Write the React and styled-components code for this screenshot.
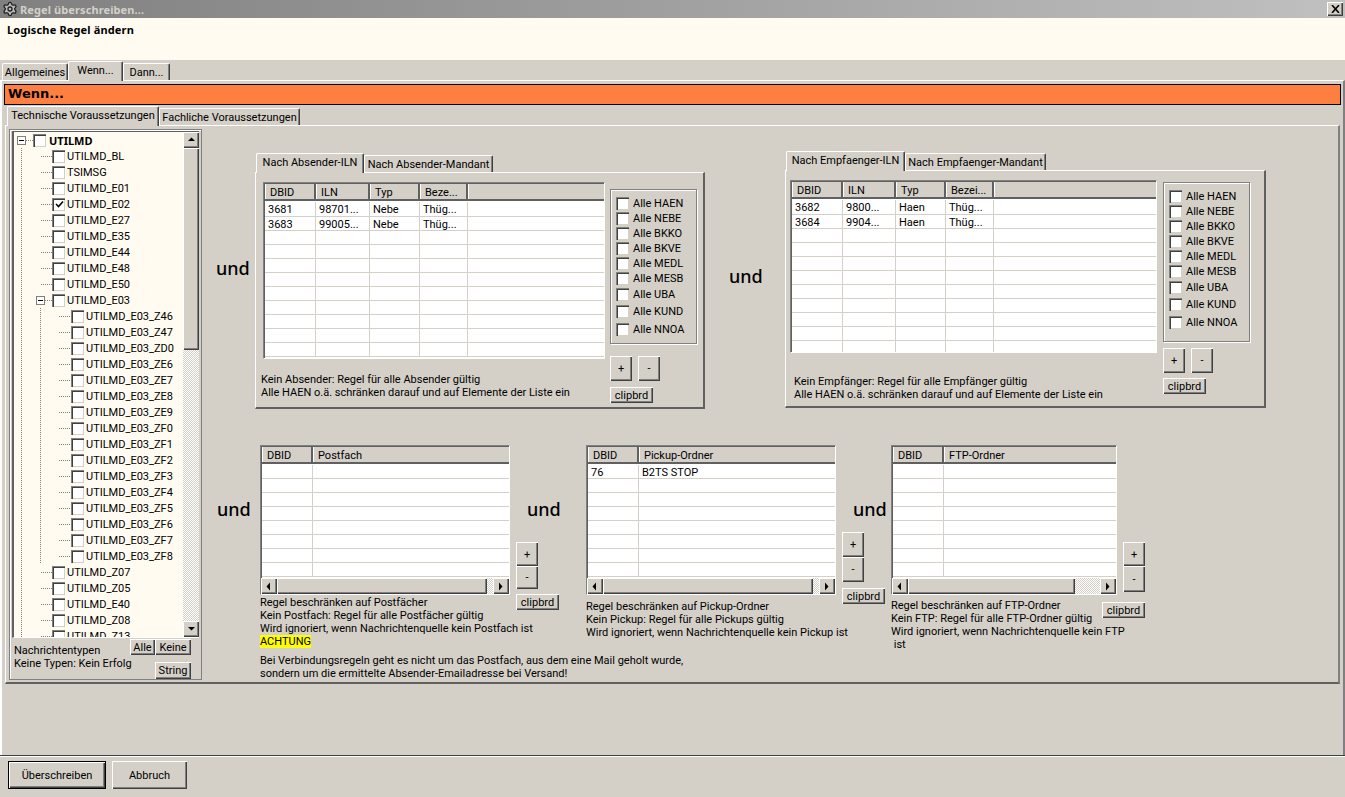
import React from 'react';
import styled, { createGlobalStyle } from 'styled-components';
import { Settings } from 'lucide-react';

const GlobalStyle = createGlobalStyle`
  html, body {
    margin: 0;
    padding: 0;
    background: #d4d0c8;
    overflow: hidden;
  }
  * { box-sizing: border-box; }
`

const raised = `box-shadow: inset 1px 1px #fff, inset -1px -1px #404040, inset -2px -2px #808080;`

const Page = styled.div`
  width: 1345px;
  height: 797px;
  display: flex;
  flex-direction: column;
  background: #d4d0c8;
  color: #000;
  font-family: Roboto, "Noto Sans", sans-serif;
  font-size: 11px;
  line-height: 13px;
`
const TitleBar = styled.div`
  height: 18px;
  flex: none;
  display: flex;
  align-items: center;
  padding: 0 2px;
  gap: 2px;
  background: linear-gradient(to right, #808080, #c0c0c0);
`
const TitleText = styled.div`
  flex: 1;
  color: #d4d0c8;
  font-family: "Noto Sans", sans-serif;
  font-weight: 700;
  font-size: 11px;
  letter-spacing: 0.1px;
`
const CloseButton = styled.div`
  width: 16px;
  height: 14px;
  display: flex;
  align-items: center;
  justify-content: center;
  background: #d4d0c8;
  ${raised}
`
const Header = styled.div`
  height: 42px;
  flex: none;
  padding: 5px 7px;
  background: #fffbf0;
  font-family: "Noto Sans", sans-serif;
  font-weight: 700;
  letter-spacing: 0.15px;
`
const TabRow = styled.div`
  display: flex;
  align-items: flex-end;
  flex: none;
  height: ${p => p.$h}px;
  padding-left: ${p => p.$left || 0}px;
  position: relative;
  z-index: 1;
`
const Tab = styled.div`
  width: ${p => p.$w}px;
  height: ${p => (p.$active ? 20 : 17)}px;
  margin-bottom: ${p => (p.$active ? -1 : 0)}px;
  padding-top: 2px;
  text-align: center;
  white-space: nowrap;
  background: #d4d0c8;
  border-top: 1px solid #fff;
  border-left: 1px solid #fff;
  border-right: 1px solid #404040;
  border-radius: 2px 2px 0 0;
  box-shadow: inset -1px 0 #808080;
`
const OuterPanel = styled.div`
  height: 675px;
  flex: none;
  padding: 3px 2px 0 2px;
  border-top: 1px solid #fff;
  border-left: 2px solid #fff;
  border-right: 2px solid #808080;
`
const OrangeBar = styled.div`
  height: 21px;
  padding-left: 3px;
  border: 1px solid #000;
  background: #ff7f40;
  font-family: "DejaVu Sans", sans-serif;
  font-weight: 700;
  font-size: 13px;
  line-height: 18px;
`
const InnerPanel = styled.div`
  height: 559px;
  margin: 0 1px 0 1px;
  padding: 3px;
  display: flex;
  border-top: 1px solid #fff;
  border-left: 1px solid #fff;
  border-right: 2px solid #808080;
  border-bottom: 2px solid #606060;
`
const TreeBox = styled.div`
  width: 193px;
  height: 551px;
  flex: none;
  display: flex;
  flex-direction: column;
  border: 1px solid #808080;
  box-shadow: inset 1px 1px #fff;
`
const TreeView = styled.div`
  height: 507px;
  margin: 1px 2px 0 2px;
  flex: none;
  display: flex;
  background: #fffbf0;
  border-top: 1px solid #606060;
  border-left: 2px solid #606060;
  border-bottom: 1px solid #fff;
`
const TreeList = styled.div`
  flex: 1;
  overflow: hidden;
`
const TreeRow = styled.div`
  height: 16px;
  display: flex;
  align-items: center;
  white-space: nowrap;
  ${p => p.$bold && `font-weight: 700; font-family: "Noto Sans", sans-serif;`}
`
const GuideV = styled.span`
  width: ${p => p.$w}px;
  height: 16px;
  flex: none;
  margin-left: ${p => p.$left}px;
  background: repeating-linear-gradient(to bottom, #808080 0 1px, transparent 1px 2px) left / 1px 100% no-repeat;
`
const Stub = styled.span`
  width: ${p => p.$w}px;
  height: 1px;
  flex: none;
  margin-left: ${p => p.$left || 0}px;
  background: repeating-linear-gradient(to right, #808080 0 1px, transparent 1px 2px);
`
const Expander = styled.span`
  width: 9px;
  height: 9px;
  flex: none;
  margin-left: ${p => p.$left}px;
  border: 1px solid #808080;
  background: linear-gradient(#000, #000) center / 5px 1px no-repeat #fff;
`
const Box = styled.span`
  width: 13px;
  height: 13px;
  flex: none;
  margin-right: ${p => p.$gap || 3}px;
  background: #fff;
  border-top: 1px solid #808080;
  border-left: 1px solid #808080;
  box-shadow: inset 1px 1px #404040, inset -1px -1px #d4d0c8;
  display: flex;
  align-items: center;
  justify-content: center;
`
const ScrollV = styled.div`
  width: 16px;
  flex: none;
  display: flex;
  flex-direction: column;
  background: repeating-conic-gradient(#fff 0 25%, #d4d0c8 0 50%) 0 0 / 2px 2px;
`
const ScrollH = styled.div`
  height: 16px;
  flex: none;
  display: flex;
  background: repeating-conic-gradient(#fff 0 25%, #d4d0c8 0 50%) 0 0 / 2px 2px;
`
const ScrollBtn = styled.div`
  width: 16px;
  height: 16px;
  flex: none;
  display: flex;
  align-items: center;
  justify-content: center;
  background: #d4d0c8;
  margin-left: ${p => (p.$push ? 'auto' : 0)};
  margin-top: ${p => (p.$pushTop ? 'auto' : 0)};
  ${raised}
`
const Thumb = styled.div`
  flex: none;
  width: ${p => p.$w || 16}px;
  height: ${p => p.$h || 16}px;
  background: #d4d0c8;
  ${raised}
`
const TreeFooter = styled.div`
  flex: 1;
  display: grid;
  grid-template-columns: 120px 25px 36px;
  grid-template-rows: 16px 7px 17px;
  padding-top: 1px;
`
const FooterText = styled.div`
  grid-row: 1 / 4;
  padding: 5px 0 0 4px;
  white-space: nowrap;
`
const Btn = styled.div`
  display: flex;
  align-items: center;
  justify-content: center;
  flex: none;
  width: ${p => (p.$w ? `${p.$w}px` : 'auto')};
  height: ${p => (p.$h ? `${p.$h}px` : 'auto')};
  background: #d4d0c8;
  white-space: nowrap;
  ${raised}
`
const StringBtn = styled(Btn)`
  grid-column: 3;
  grid-row: 3;
`
const Content = styled.div`
  flex: 1;
  display: flex;
  flex-direction: column;
`
const RowOne = styled.div`
  height: 258px;
  margin-top: 21px;
  flex: none;
  display: flex;
  align-items: flex-start;
`
const RowTwo = styled.div`
  margin-top: 37px;
  flex: none;
  display: flex;
  align-items: flex-start;
`
const Und = styled.div`
  width: 32px;
  flex: none;
  margin-left: ${p => p.$left}px;
  margin-top: ${p => p.$top}px;
  font-family: "Noto Sans", sans-serif;
  font-size: 18px;
  line-height: 22px;
  font-weight: 500;
`
const GroupWrap = styled.div`
  flex: none;
  width: ${p => p.$w}px;
  margin-left: ${p => p.$left}px;
  margin-top: ${p => p.$top}px;
`
const GroupPanel = styled.div`
  height: ${p => p.$h}px;
  padding: 9px 0 0 ${p => p.$padLeft}px;
  display: flex;
  gap: ${p => p.$gap}px;
  background: #d4d0c8;
  border-top: 1px solid #fff;
  border-left: 1px solid #fff;
  border-right: 2px solid #606060;
  border-bottom: 2px solid #606060;
`
const GroupLeft = styled.div`
  flex: none;
  display: flex;
  flex-direction: column;
`
const GroupRight = styled.div`
  flex: none;
  display: flex;
  flex-direction: column;
`
const HelpText = styled.div`
  white-space: nowrap;
  margin-top: ${p => p.$top || 0}px;
  margin-left: ${p => p.$left || 0}px;
`
const Frame = styled.div`
  width: ${p => p.$w}px;
  height: ${p => p.$h}px;
  flex: none;
  display: flex;
  flex-direction: column;
  overflow: hidden;
  background: #fff;
  border: 1px solid #fff;
  border-top-color: #808080;
  border-left-color: #808080;
  box-shadow: inset 1px 1px #606060;
`
const HeadRow = styled.div`
  height: 17px;
  flex: none;
  display: flex;
  background: #d4d0c8;
  margin: 1px 0 0 1px;
  border-bottom: 2px solid #606060;
`
const HeadCell = styled.div`
  flex: ${p => (p.$w ? 'none' : '1')};
  width: ${p => (p.$w ? `${p.$w}px` : 'auto')};
  padding: 3px 0 0 4px;
  line-height: 12px;
  white-space: nowrap;
  border-left: 1px solid #fff;
  border-right: ${p => (p.$w ? '2px solid #606060' : 'none')};
`
const BodyRow = styled.div`
  height: ${p => p.$h}px;
  flex: none;
  display: flex;
  margin-left: 1px;
  border-bottom: 1px solid #d4d0c8;
  margin-top: ${p => (p.$first ? 1 : 0)}px;
`
const BodyCell = styled.div`
  flex: ${p => (p.$w ? 'none' : '1')};
  width: ${p => (p.$w ? `${p.$w}px` : 'auto')};
  padding: 2px 0 0 3px;
  white-space: nowrap;
  line-height: 12px;
  border-right: ${p => (p.$w ? '1px solid #d4d0c8' : 'none')};
`
const TableBody = styled.div`
  flex: 1;
  overflow: hidden;
`
const Checks = styled.div`
  width: 87px;
  height: ${p => p.$h}px;
  flex: none;
  padding: 6px 0 0 5px;
  border: 1px solid #808080;
  box-shadow: 1px 1px #fff, inset 1px 1px #fff;
`
const CheckRow = styled.div`
  height: ${p => p.$h}px;
  display: flex;
  align-items: center;
  white-space: nowrap;
`
const PlusMinus = styled.div`
  display: flex;
  gap: 6px;
  margin-top: ${p => p.$top}px;
`
const Stepper = styled.div`
  display: flex;
  flex-direction: column;
  margin-top: ${p => p.$top || 0}px;
`
const Clip = styled(Btn)`
  width: 43px;
  height: 16px;
  margin-top: ${p => p.$top}px;
`
const FloatClip = styled(Clip)`
  float: right;
`
const SideCol = styled.div`
  width: 43px;
  flex: none;
  margin-left: 6px;
`
const TableCol = styled.div`
  flex: none;
  width: ${p => p.$w}px;
  margin-left: ${p => p.$left}px;
`
const Yellow = styled.span`
  background: #ffff00;
`
const Spacer = styled.div`
  height: ${p => p.$h}px;
`
const FtpTop = styled.div`
  display: flex;
  gap: 6px;
`
const Footer = styled.div`
  flex: 1;
  display: flex;
  gap: 6px;
  padding: 5px 0 0 8px;
  border-top: 1px solid #404040;
  box-shadow: inset 0 1px #fff;
`
const MainBtn = styled(Btn)`
  height: 28px;
  ${p => p.$default && 'border: 1px solid #000;'}
`

const Arrow = ({ dir }) => {
  const pts = {
    up: '1,5 8,5 4.5,1.5',
    down: '1,2 8,2 4.5,5.5',
    left: '5,0.5 5,8.5 1.5,4.5',
    right: '2,0.5 2,8.5 5.5,4.5',
  }
  return (
    <svg width="9" height="9" viewBox="0 0 9 9">
      <polygon points={pts[dir]} fill="#000" />
    </svg>
  )
}

const Check = ({ on, gap }) => (
  <Box $gap={gap}>
    {on && (
      <svg width="9" height="9" viewBox="0 0 9 9">
        <path d="M1 4l2.5 2.5L8 1.5" fill="none" stroke="#000" strokeWidth="1.6" />
      </svg>
    )}
  </Box>
)

const levelOne = ['UTILMD_BL', 'TSIMSG', 'UTILMD_E01', 'UTILMD_E02', 'UTILMD_E27', 'UTILMD_E35', 'UTILMD_E44', 'UTILMD_E48', 'UTILMD_E50']
const levelTwo = ['Z46', 'Z47', 'ZD0', 'ZE6', 'ZE7', 'ZE8', 'ZE9', 'ZF0', 'ZF1', 'ZF2', 'ZF3', 'ZF4', 'ZF5', 'ZF6', 'ZF7', 'ZF8']
const levelOneEnd = ['UTILMD_Z07', 'UTILMD_Z05', 'UTILMD_E40', 'UTILMD_Z08', 'UTILMD_Z13']

const Tree = () => (
  <TreeList>
    <TreeRow $bold>
      <Expander $left={3} />
      <Stub $w={7} />
      <Check />
      UTILMD
    </TreeRow>
    {levelOne.map(name => (
      <TreeRow key={name}>
        <GuideV $left={7} $w={11} />
        <Stub $left={9} $w={11} />
        <Check gap={2} on={name === 'UTILMD_E02'} />
        {name}
      </TreeRow>
    ))}
    <TreeRow>
      <GuideV $left={7} $w={15} />
      <Expander $left={0} />
      <Stub $w={7} />
      <Check gap={2} />
      UTILMD_E03
    </TreeRow>
    {levelTwo.map(name => (
      <TreeRow key={name}>
        <GuideV $left={7} $w={19} />
        <GuideV $left={0} $w={19} />
        <Stub $w={12} />
        <Check gap={2} />
        UTILMD_E03_{name}
      </TreeRow>
    ))}
    {levelOneEnd.map(name => (
      <TreeRow key={name}>
        <GuideV $left={7} $w={11} />
        <Stub $left={9} $w={11} />
        <Check gap={2} />
        {name}
      </TreeRow>
    ))}
  </TreeList>
)

const Table = ({ w, h, cols, rows, count, scroll, thumb, firstRow = 15 }) => {
  const blank = Array.from({ length: count - rows.length }, () => [])
  return (
    <Frame $w={w} $h={h}>
      <HeadRow>
        {cols.map((c, i) => (
          <HeadCell key={i} $w={c.w}>{c.t}</HeadCell>
        ))}
      </HeadRow>
      <TableBody>
        {[...rows, ...blank].map((r, i) => (
          <BodyRow key={i} $first={i === 0} $h={i === 0 ? firstRow : 14}>
            {cols.map((c, j) => (
              <BodyCell key={j} $w={c.w}>{r[j]}</BodyCell>
            ))}
          </BodyRow>
        ))}
      </TableBody>
      {scroll && (
        <ScrollH>
          <ScrollBtn><Arrow dir="left" /></ScrollBtn>
          <Thumb $w={thumb} />
          <ScrollBtn $push><Arrow dir="right" /></ScrollBtn>
        </ScrollH>
      )}
    </Frame>
  )
}

const CheckList = ({ h, heights }) => {
  const labels = ['HAEN', 'NEBE', 'BKKO', 'BKVE', 'MEDL', 'MESB', 'UBA', 'KUND', 'NNOA']
  return (
    <Checks $h={h}>
      {labels.map((l, i) => (
        <CheckRow key={l} $h={heights[i]}>
          <Check gap={4} />
          Alle {l}
        </CheckRow>
      ))}
    </Checks>
  )
}

const rowHeights = [15, 15, 15, 15, 15, 15, 16, 18, 18]

export default function App() {
  return (
    <Page>
      <GlobalStyle />
      <TitleBar>
        <Settings size={16} color="#222" fill="#bbb" strokeWidth={2} />
        <TitleText>Regel überschreiben...</TitleText>
        <CloseButton>
          <svg width="9" height="8" viewBox="0 0 9 8">
            <path d="M1 0l7 8M8 0L1 8" stroke="#000" strokeWidth="1.6" fill="none" />
          </svg>
        </CloseButton>
      </TitleBar>
      <Header>Logische Regel ändern</Header>
      <TabRow $h={20} $left={2}>
        <Tab $w={66}>Allgemeines</Tab>
        <Tab $w={55} $active>Wenn...</Tab>
        <Tab $w={47}>Dann...</Tab>
      </TabRow>
      <OuterPanel>
        <OrangeBar>Wenn...</OrangeBar>
        <TabRow $h={20} $left={3}>
          <Tab $w={152} $active>Technische Voraussetzungen</Tab>
          <Tab $w={141}>Fachliche Voraussetzungen</Tab>
        </TabRow>
        <InnerPanel>
          <TreeBox>
            <TreeView>
              <Tree />
              <ScrollV>
                <ScrollBtn><Arrow dir="up" /></ScrollBtn>
                <Thumb $h={202} />
                <ScrollBtn $pushTop><Arrow dir="down" /></ScrollBtn>
              </ScrollV>
            </TreeView>
            <TreeFooter>
              <FooterText>Nachrichtentypen<br />Keine Typen: Kein Erfolg</FooterText>
              <Btn>Alle</Btn>
              <Btn>Keine</Btn>
              <StringBtn>String</StringBtn>
            </TreeFooter>
          </TreeBox>
          <Content>
            <RowOne>
              <Und $left={14} $top={107}>und</Und>
              <GroupWrap $w={450} $left={7} $top={2}>
                <TabRow $h={20} $left={1}>
                  <Tab $w={108} $active>Nach Absender-ILN</Tab>
                  <Tab $w={129}>Nach Absender-Mandant</Tab>
                </TabRow>
                <GroupPanel $h={237} $padLeft={7} $gap={5}>
                  <GroupLeft>
                    <Table
                      w={342}
                      h={177}
                      cols={[{ t: 'DBID', w: 51 }, { t: 'ILN', w: 54 }, { t: 'Typ', w: 50 }, { t: 'Beze...', w: 48 }, { t: '' }]}
                      rows={[['3681', '98701...', 'Nebe', 'Thüg...'], ['3683', '99005...', 'Nebe', 'Thüg...']]}
                      count={11}
                    />
                    <HelpText $top={14} $left={-2}>
                      Kein Absender: Regel für alle Absender gültig<br />
                      Alle HAEN o.ä. schränken darauf und auf Elemente der Liste ein
                    </HelpText>
                  </GroupLeft>
                  <GroupRight>
                    <Spacer $h={7} />
                    <CheckList h={155} heights={rowHeights} />
                    <PlusMinus $top={12}>
                      <Btn $w={22} $h={25}>+</Btn>
                      <Btn $w={22} $h={25}>-</Btn>
                    </PlusMinus>
                    <Clip $top={6}>clipbrd</Clip>
                  </GroupRight>
                </GroupPanel>
              </GroupWrap>
              <Und $left={24} $top={115}>und</Und>
              <GroupWrap $w={481} $left={24} $top={0}>
                <TabRow $h={20} $left={1}>
                  <Tab $w={119} $active>Nach Empfaenger-ILN</Tab>
                  <Tab $w={141}>Nach Empfaenger-Mandant</Tab>
                </TabRow>
                <GroupPanel $h={238} $padLeft={4} $gap={6}>
                  <GroupLeft>
                    <Table
                      w={367}
                      h={173}
                      cols={[{ t: 'DBID', w: 51 }, { t: 'ILN', w: 53 }, { t: 'Typ', w: 50 }, { t: 'Bezei...', w: 48 }, { t: '' }]}
                      rows={[['3682', '9800...', 'Haen', 'Thüg...'], ['3684', '9904...', 'Haen', 'Thüg...']]}
                      count={11}
                    />
                    <HelpText $top={22} $left={4}>
                      Kein Empfänger: Regel für alle Empfänger gültig<br />
                      Alle HAEN o.ä. schränken darauf und auf Elemente der Liste ein
                    </HelpText>
                  </GroupLeft>
                  <GroupRight>
                    <Spacer $h={2} />
                    <CheckList h={160} heights={rowHeights} />
                    <PlusMinus $top={6}>
                      <Btn $w={22} $h={25}>+</Btn>
                      <Btn $w={22} $h={25}>-</Btn>
                    </PlusMinus>
                    <Clip $top={5}>clipbrd</Clip>
                  </GroupRight>
                </GroupPanel>
              </GroupWrap>
            </RowOne>
            <RowTwo>
              <Und $left={15} $top={53}>und</Und>
              <TableCol $w={250} $left={11}>
                <Table w={250} h={150} firstRow={14} cols={[{ t: 'DBID', w: 51 }, { t: 'Postfach' }]} rows={[]} count={8} scroll thumb={210} />
                <HelpText $top={1}>
                  Regel beschränken auf Postfächer<br />
                  Kein Postfach: Regel für alle Postfächer gültig<br />
                  Wird ignoriert, wenn Nachrichtenquelle kein Postfach ist<br />
                  <Yellow>ACHTUNG</Yellow>
                </HelpText>
                <HelpText $top={6}>
                  Bei Verbindungsregeln geht es nicht um das Postfach, aus dem eine Mail geholt wurde,<br />
                  sondern um die ermittelte Absender-Emailadresse bei Versand!
                </HelpText>
              </TableCol>
              <SideCol>
                <Und $left={11} $top={53}>und</Und>
                <Stepper $top={22}>
                  <Btn $w={22} $h={24}>+</Btn>
                  <Btn $w={22} $h={23}>-</Btn>
                </Stepper>
                <Clip $top={5}>clipbrd</Clip>
              </SideCol>
              <TableCol $w={250} $left={27}>
                <Table w={250} h={150} firstRow={14} cols={[{ t: 'DBID', w: 51 }, { t: 'Pickup-Ordner' }]} rows={[['76', 'B2TS STOP']]} count={8} scroll thumb={210} />
                <HelpText $top={5}>
                  Regel beschränken auf Pickup-Ordner<br />
                  Kein Pickup: Regel für alle Pickups gültig<br />
                  Wird ignoriert, wenn Nachrichtenquelle kein Pickup ist
                </HelpText>
              </TableCol>
              <SideCol>
                <Und $left={11} $top={53}>und</Und>
                <Stepper $top={12}>
                  <Btn $w={22} $h={25}>+</Btn>
                  <Btn $w={22} $h={25}>-</Btn>
                </Stepper>
                <Clip $top={6}>clipbrd</Clip>
              </SideCol>
              <TableCol $w={254} $left={6}>
                <FtpTop>
                  <Table w={226} h={150} firstRow={14} cols={[{ t: 'DBID', w: 51 }, { t: 'FTP-Ordner' }]} rows={[]} count={8} scroll thumb={167} />
                  <Stepper $top={97}>
                    <Btn $w={22} $h={24}>+</Btn>
                    <Btn $w={22} $h={26}>-</Btn>
                  </Stepper>
                </FtpTop>
                <HelpText $top={4}>
                  <FloatClip $top={3}>clipbrd</FloatClip>
                  Regel beschränken auf FTP-Ordner<br />
                  Kein FTP: Regel für alle FTP-Ordner gültig<br />
                  Wird ignoriert, wenn Nachrichtenquelle kein FTP<br />
                  &nbsp;ist
                </HelpText>
              </TableCol>
            </RowTwo>
          </Content>
        </InnerPanel>
      </OuterPanel>
      <Footer>
        <MainBtn $w={98} $default>Überschreiben</MainBtn>
        <MainBtn $w={75}>Abbruch</MainBtn>
      </Footer>
    </Page>
  )
}
